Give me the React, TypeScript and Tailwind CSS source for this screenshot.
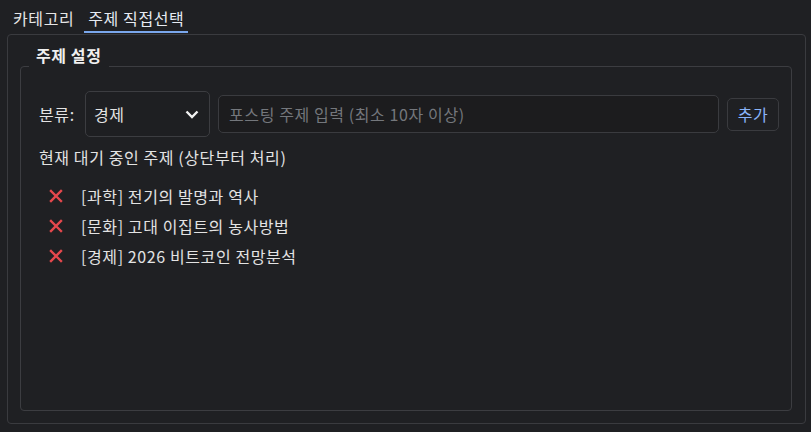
import { useState } from 'react';

const topics = [
  '[과학] 전기의 발명과 역사',
  '[문화] 고대 이집트의 농사방법',
  '[경제] 2026 비트코인 전망분석',
];

function RemoveIcon() {
  return (
    <svg width="14" height="14" viewBox="0 0 14 14" className="shrink-0">
      <path d="M2 2 L12 12 M12 2 L2 12" stroke="#e5484d" strokeWidth="2.4" strokeLinecap="square" />
    </svg>
  );
}

export default function App() {
  const [tab, setTab] = useState(1);
  const [category] = useState('경제');

  return (
    <div
      className="w-[811px] h-[432px] bg-[#1f2023] text-[#e3e3e3] text-[16px] tracking-[0.6px] flex flex-col"
      style={{ fontFamily: '"Noto Sans CJK KR", "Noto Sans", sans-serif' }}
    >
      {/* tabs */}
      <div className="flex h-[34px] pl-[9px] gap-[6px]">
        {['카테고리', '주제 직접선택'].map((t, i) => (
          <button
            key={t}
            type="button"
            onClick={() => setTab(i)}
            className={
              'px-[4px] pt-[5px] leading-[22px] h-[33px] border-b-2 ' +
              (tab === i ? 'border-[#7aa7ec] text-[#e6ebf2]' : 'border-transparent text-[#e6e6e6]')
            }
          >
            {t}
          </button>
        ))}
      </div>

      {/* frame */}
      <div className="flex-1 ml-[7px] mr-[5px] mb-[8px] border border-[#3a3b3f] rounded-[4px] flex flex-col pt-[31px] pl-[12px] pr-[13px] pb-[12px]">
        <div className="relative flex-1 border border-[#3c3d41] rounded-[4px] pt-[24px] pl-[18px] pr-[12px]">
          <span className="absolute left-[8px] top-[-23px] h-[24px] px-[7px] bg-[#1f2023] leading-[22px] font-semibold text-[#f0f0f0]">
            주제 설정
          </span>

          <div className="flex items-center h-[46px]">
            <span className="w-[46px] shrink-0">분류:</span>
            <div className="w-[125px] h-[46px] shrink-0 border border-[#3c3d41] rounded-[5px] bg-[#1e1f22] flex items-center justify-between pl-[8px] pr-[9px]">
              <span>{category}</span>
              <svg width="16" height="16" viewBox="0 0 16 16">
                <path d="M2.5 5.5 L8 11 L13.5 5.5" stroke="#f2f2f2" strokeWidth="2.4" fill="none" />
              </svg>
            </div>
            <input
              placeholder="포스팅 주제 입력 (최소 10자 이상)"
              className="ml-[8px] flex-1 h-[38px] border border-[#3a3b3f] rounded-[5px] bg-[#1c1c1e] px-[10px] outline-none placeholder:text-[#74777c]"
            />
            <button
              type="button"
              className="ml-[8px] w-[52px] h-[33px] shrink-0 border border-[#3a3b3f] rounded-[5px] bg-[#1f2023] text-[#8ab4f8]"
            >
              추가
            </button>
          </div>

          <div className="mt-[9px] leading-[22px]">현재 대기 중인 주제 (상단부터 처리)</div>

          <ul className="mt-[13px] pl-[10px]">
            {topics.map((t) => (
              <li key={t} className="flex items-center h-[30px] gap-[18px]">
                <RemoveIcon />
                <span>{t}</span>
              </li>
            ))}
          </ul>
        </div>
      </div>
    </div>
  );
}
